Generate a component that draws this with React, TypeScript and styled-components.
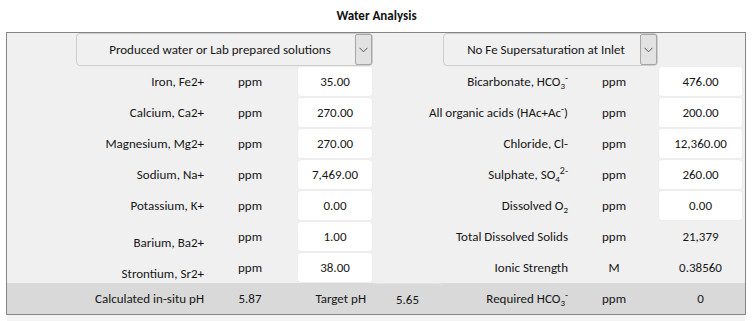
import React from 'react';
import styled, { createGlobalStyle } from 'styled-components';

const GlobalStyle = createGlobalStyle`
  body {
    margin: 0;
    background: #ffffff;
    font-family: Carlito, Calibri, Lato, "Liberation Sans", sans-serif;
    font-size: 13px;
    color: #161616;
  }
`;

const COLS = '208px 70px 88px 70px 137px 68px 97px';

const Page = styled.div`
  width: 753px;
  height: 321px;
  overflow: hidden;
`;

const Title = styled.h1`
  margin: 0;
  height: 32px;
  line-height: 32px;
  text-align: center;
  font-size: 13px;
  font-weight: 700;
  color: #111;
`;

const Panel = styled.div`
  margin-left: 6px;
  width: 738px;
  border: 1px solid #858585;
  background: #f0f0f0;
`;

const Tail = styled.div`
  margin-left: 7px;
  width: 738px;
  height: 6px;
  background: #f3f3f3;
`;

const Row = styled.div<{ $h?: number; $shade?: boolean }>`
  display: grid;
  grid-template-columns: ${COLS};
  height: ${(p) => p.$h ?? 31}px;
  align-items: center;
  background: ${(p) => (p.$shade ? '#d9d9d9' : 'transparent')};
`;

const Label = styled.div<{ $span?: boolean; $low?: boolean; $pad?: number }>`
  grid-column: ${(p) => (p.$span ? 'span 2' : 'auto')};
  text-align: right;
  padding-right: ${(p) => p.$pad ?? 11}px;
  padding-top: ${(p) => (p.$low ? 12 : 0)}px;
  white-space: nowrap;
`;

const Unit = styled.div`
  text-align: center;
`;

const Input = styled.div<{ $w: number; $mr?: number }>`
  justify-self: end;
  width: ${(p) => p.$w}px;
  height: 31px;
  margin-right: ${(p) => p.$mr ?? 0}px;
  box-sizing: border-box;
  background: #ffffff;
  border: 1px solid #ededed;
  border-radius: 4px;
  display: flex;
  align-items: center;
  justify-content: center;
`;

const Value = styled.div<{ $w: number; $mr?: number }>`
  justify-self: end;
  width: ${(p) => p.$w}px;
  margin-right: ${(p) => p.$mr ?? 0}px;
  text-align: center;
`;

const BoxValue = styled.div`
  height: 31px;
  box-sizing: border-box;
  border-top: 1px solid #e4e4e4;
  border-radius: 5px 5px 0 0;
  display: flex;
  align-items: center;
  padding-left: 23px;
`;

const Select = styled.div<{ $col: string; $w: number; $start?: boolean }>`
  grid-column: ${(p) => p.$col};
  justify-self: ${(p) => (p.$start ? 'start' : 'end')};
  width: ${(p) => p.$w}px;
  height: 33px;
  box-sizing: border-box;
  border: 1px solid #cdcdcd;
  border-radius: 4px;
  background: #f0f0f0;
  display: flex;
  align-items: center;
`;

const SelectText = styled.div`
  flex: 1;
  text-align: center;
  padding-left: 8px;
  white-space: nowrap;
`;

const Chevron = styled.div`
  width: 17px;
  height: 31px;
  box-sizing: border-box;
  border: 1px solid #a6a6a6;
  border-radius: 2px;
  background: #e2e2e2;
  display: flex;
  align-items: center;
  justify-content: center;
`;

const Sub = styled.sub`
  font-size: 9px;
  vertical-align: -3px;
  line-height: 0;
`;

const Sup = styled.sup`
  font-size: 10px;
  vertical-align: 5px;
  line-height: 0;
`;

const ChevronIcon = () => (
  <svg width="9" height="6" viewBox="0 0 9 6">
    <polyline points="0.5,0.8 4.5,4.8 8.5,0.8" fill="none" stroke="#555" strokeWidth="1" />
  </svg>
);

type Item = {
  left: React.ReactNode;
  leftVal: string;
  leftLow?: boolean;
  right: React.ReactNode;
  rightUnit: string;
  rightVal: string;
  rightInput: boolean;
};

const items: Item[] = [
  {
    left: 'Iron, Fe2+',
    leftVal: '35.00',
    right: <>Bicarbonate, HCO<Sub>3</Sub><Sup>-</Sup></>,
    rightUnit: 'ppm',
    rightVal: '476.00',
    rightInput: true,
  },
  {
    left: 'Calcium, Ca2+',
    leftVal: '270.00',
    right: <>All organic acids (HAc+Ac<Sup>-</Sup>)</>,
    rightUnit: 'ppm',
    rightVal: '200.00',
    rightInput: true,
  },
  {
    left: 'Magnesium, Mg2+',
    leftVal: '270.00',
    right: 'Chloride, Cl-',
    rightUnit: 'ppm',
    rightVal: '12,360.00',
    rightInput: true,
  },
  {
    left: 'Sodium, Na+',
    leftVal: '7,469.00',
    right: <>Sulphate, SO<Sub>4</Sub><Sup>2-</Sup></>,
    rightUnit: 'ppm',
    rightVal: '260.00',
    rightInput: true,
  },
  {
    left: 'Potassium, K+',
    leftVal: '0.00',
    right: <>Dissolved O<Sub>2</Sub></>,
    rightUnit: 'ppm',
    rightVal: '0.00',
    rightInput: true,
  },
  {
    left: 'Barium, Ba2+',
    leftVal: '1.00',
    leftLow: true,
    right: 'Total Dissolved Solids',
    rightUnit: 'ppm',
    rightVal: '21,379',
    rightInput: false,
  },
  {
    left: 'Strontium, Sr2+',
    leftVal: '38.00',
    leftLow: true,
    right: 'Ionic Strength',
    rightUnit: 'M',
    rightVal: '0.38560',
    rightInput: false,
  },
];

const App: React.FC = () => {
  return (
    <Page>
      <GlobalStyle />
      <Title>Water Analysis</Title>
      <Panel>
        <Row $h={33}>
          <Select $col="1 / 4" $w={297}>
            <SelectText>Produced water or Lab prepared solutions</SelectText>
            <Chevron><ChevronIcon /></Chevron>
          </Select>
          <Select $col="5 / 8" $w={215} $start>
            <SelectText>No Fe Supersaturation at Inlet</SelectText>
            <Chevron><ChevronIcon /></Chevron>
          </Select>
        </Row>
        {items.map((it, i) => (
          <Row key={i}>
            <Label $low={it.leftLow}>{it.left}</Label>
            <Unit>ppm</Unit>
            <Input $w={76}>{it.leftVal}</Input>
            <Label $span $pad={12}>{it.right}</Label>
            <Unit>{it.rightUnit}</Unit>
            {it.rightInput ? (
              <Input $w={85} $mr={2}>{it.rightVal}</Input>
            ) : (
              <Value $w={85} $mr={2}>{it.rightVal}</Value>
            )}
          </Row>
        ))}
        <Row $shade>
          <Label>Calculated in-situ pH</Label>
          <Unit>5.87</Unit>
          <Label $pad={7}>Target pH</Label>
          <BoxValue>5.65</BoxValue>
          <Label $pad={12}>Required HCO<Sub>3</Sub><Sup>-</Sup></Label>
          <Unit>ppm</Unit>
          <Value $w={85} $mr={2}>0</Value>
        </Row>
      </Panel>
      <Tail />
    </Page>
  );
};

export default App;
